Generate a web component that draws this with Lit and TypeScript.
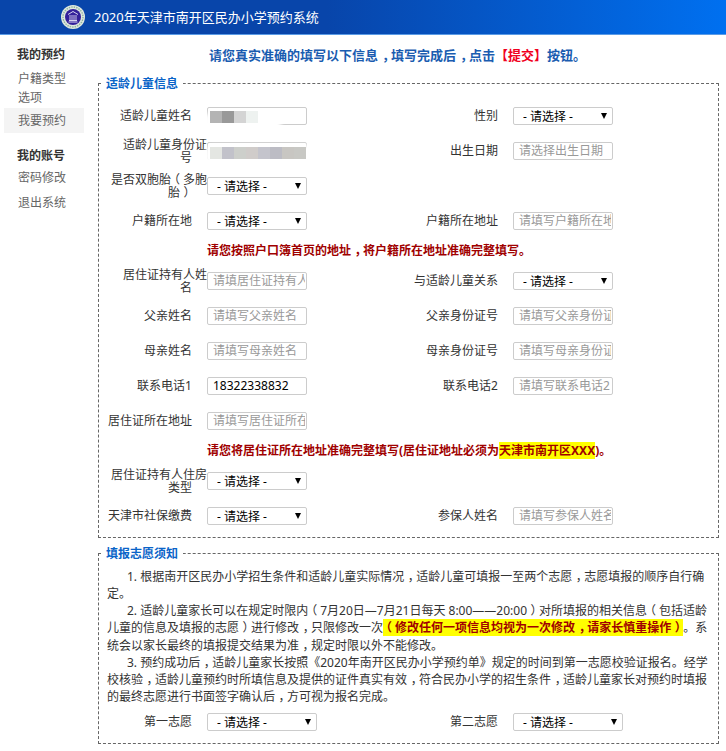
import { LitElement, html, css } from "lit";
import { customElement } from "lit/decorators.js";

type Cell = { label: string; kind: "input" | "select" | "value" | "blur1" | "blur2" | "none"; text?: string };

const i = (label: string, text: string): Cell => ({ label, kind: "input", text });
const s = (label: string): Cell => ({ label, kind: "select" });
const none: Cell = { label: "", kind: "none" };

const rowsA: Cell[][] = [
  [{ label: "适龄儿童姓名", kind: "blur1" }, s("性别")],
  [{ label: "适龄儿童身份证号", kind: "blur2" }, i("出生日期", "请选择出生日期")],
  [s("是否双胞胎（多胞胎）"), none],
  [s("户籍所在地"), i("户籍所在地址", "请填写户籍所在地址")],
];
const rowsB: Cell[][] = [
  [i("居住证持有人姓名", "请填居住证持有人姓名"), s("与适龄儿童关系")],
  [i("父亲姓名", "请填写父亲姓名"), i("父亲身份证号", "请填写父亲身份证号")],
  [i("母亲姓名", "请填写母亲姓名"), i("母亲身份证号", "请填写母亲身份证号")],
  [{ label: "联系电话1", kind: "value", text: "18322338832" }, i("联系电话2", "请填写联系电话2")],
  [i("居住证所在地址", "请填写居住证所在地址"), none],
];
const rowsC: Cell[][] = [
  [s("居住证持有人住房类型"), none],
  [s("天津市社保缴费"), i("参保人姓名", "请填写参保人姓名")],
];

/* The reference font centres its fullwidth punctuation; nudge the glyphs to match. */
const zh = (text: string) =>
  text.split(/([，（）])/).map((part) => {
    if (part === "，") return html`<span class="pc">，</span>`;
    if (part === "（") return html`<span class="po">（</span>`;
    if (part === "）") return html`<span class="pe">）</span>`;
    return part;
  });

@customElement("app-root")
export class AppRoot extends LitElement {
  static styles = css`
    :host {
      display: block;
      font-family: "Noto Sans", "Noto Sans CJK SC", sans-serif;
      font-size: 12px;
      line-height: 17px;
      color: #333;
      text-spacing-trim: space-all;
    }
    * { box-sizing: border-box; }
    .pc, .pe { position: relative; left: 0.3em; }
    .po { position: relative; left: -0.25em; }
    .header {
      height: 35px;
      display: flex;
      align-items: center;
      gap: 9px;
      padding-left: 61px;
      background: linear-gradient(90deg, #0845aa 0%, #0845aa 45%, #0070f0 100%);
      border-bottom: 1px solid #5a9be6;
      color: #fff;
      font-size: 13px;
    }
    .logo { width: 24px; height: 24px; display: block; }
    .body { display: flex; }
    .side { width: 98px; flex: none; padding: 7px 14px 0 4px; }
    .side h4 { margin: 0; padding-left: 13px; font-size: 12px; font-weight: bold; color: #333; height: 24px; line-height: 25px; }
    .side h4.second { margin-top: 10px; margin-bottom: -2px; }
    .side a { display: block; padding-left: 14px; color: #666; line-height: 19px; padding-top: 3px; padding-bottom: 3px; }
    .side a.multi { padding-bottom: 1px; }
    .side a.active { background: #f4f4f4; line-height: 25px; padding-top: 0; padding-bottom: 0; }
    .main { flex: 1; min-width: 0; padding: 8px 7px 7px 0; }
    .lead { margin: 0 0 7px; padding-left: 111px; height: 25px; line-height: 25px; font-size: 13px; font-weight: bold; color: #1a5cb0; }
    .lead em { font-style: normal; color: #f00020; }
    fieldset { margin: 0; padding: 0 5px 4px 8px; border: 1px dashed #666; min-width: 0; }
    fieldset + fieldset { margin-top: 7px; }
    legend { margin-left: -6px; padding: 0 5px; font-weight: bold; color: #0a64c8; line-height: 17px; }
    .form { display: flex; flex-direction: column; margin-top: 6px; }
    .row { display: flex; height: 35px; align-items: center; }
    .cell { width: 306px; flex: none; display: flex; align-items: center; }
    .label { width: 100px; flex: none; text-align: right; line-height: 13px; color: #333; }
    .gap { letter-spacing: 11.88px; }
    .control { position: relative; width: 100px; height: 18px; }
    .control.wide { width: 110px; }
    input, select {
      display: block;
      width: 100%;
      height: 100%;
      margin: 0;
      font: inherit;
      color: #000;
      background: #fff;
      border: 1px solid #ccc;
      border-radius: 2px;
      outline: none;
    }
    input { padding: 0 1px 0 5px; }
    input::placeholder { color: #999; opacity: 1; }
    select { appearance: none; padding: 0 0 0 9px; }
    .select::after {
      content: "";
      position: absolute;
      right: 6px;
      top: 6px;
      border-left: 3px solid transparent;
      border-right: 3px solid transparent;
      border-top: 6px solid #000;
      pointer-events: none;
    }
    .note { height: 25px; line-height: 25px; padding-left: 100px; font-weight: bold; color: #a00000; white-space: nowrap; }
    mark { background: #ffff00; color: inherit; }
    .blur { position: absolute; display: flex; height: 12px; left: 3px; top: 4px; }
    .blur i { display: block; width: 12px; height: 12px; }
    .smear { position: absolute; background: #fff; border-radius: 8px; filter: blur(2px); }
    .rules { margin-top: 6px; margin-right: -1px; color: #333; line-height: 17.14px; }
    .rules p { margin: 0; text-indent: 20px; }
    .rules mark { font-weight: bold; color: #a00000; }
    .choice { display: flex; align-items: center; height: 35px; margin-top: -1px; }
  `;

  private control(c: Cell) {
    if (c.kind === "select") {
      return html`<div class="control select">
        <select><option>- 请选择 -</option></select>
      </div>`;
    }
    if (c.kind === "value") {
      return html`<div class="control"><input value=${c.text ?? ""} /></div>`;
    }
    if (c.kind === "blur1") {
      return html`<div class="control">
        <input />
        <div class="smear" style="left:-4px;top:6px;width:78px;height:26px"></div>
        <div class="blur">
          ${["#b4b4b4", "#999999", "#d4d4d4", "#eef2f0"].map((b) => html`<i style="background:${b}"></i>`)}
        </div>
      </div>`;
    }
    if (c.kind === "blur2") {
      return html`<div class="control">
        <input />
        <div class="smear" style="left:-2px;top:3px;width:116px;height:22px"></div>
        <div class="blur" style="top:5px">
          ${["#e4e6e2", "#c2c2ca", "#cdcfcb", "#d0ccca", "#c4c4cc", "#bcbcc4", "#c8c6c2", "#c8c8c4"].map(
            (b) => html`<i style="background:${b}"></i>`,
          )}
        </div>
      </div>`;
    }
    return html`<div class="control"><input placeholder=${c.text ?? ""} /></div>`;
  }

  private cell(c: Cell) {
    if (c.kind === "none") return html`<div class="cell"></div>`;
    return html`<div class="cell">
      <div class="label">${zh(c.label)}<span class="gap">\u00a0</span></div>
      ${this.control(c)}
    </div>`;
  }

  private rows(rows: Cell[][]) {
    return rows.map((r) => html`<div class="row">${r.map((c) => this.cell(c))}</div>`);
  }

  render() {
    return html`
      <div class="header">
        <svg class="logo" viewBox="0 0 24 24">
          <circle cx="12" cy="12" r="12" fill="#dfe8e0" />
          <circle cx="12" cy="12" r="10" fill="none" stroke="#8fb5a0" stroke-width="1.4" stroke-dasharray="1.5 1" />
          <circle cx="12" cy="12" r="8" fill="#33209a" />
          <path d="M7 9.5 12 6.5l5 3M8 15.5h8M7.5 17h9" fill="none" stroke="#d8d4f0" stroke-width="1" />
          <path d="M9 10v5M11 10v5M13 10v5M15 10v5" stroke="#d8d4f0" stroke-width="0.9" />
        </svg>
        <span>2020年天津市南开区民办小学预约系统</span>
      </div>
      <div class="body">
        <nav class="side">
          <h4>我的预约</h4>
          <a class="multi">户籍类型<br />选项</a>
          <a class="active">我要预约</a>
          <h4 class="second">我的账号</h4>
          <a>密码修改</a>
          <a>退出系统</a>
        </nav>
        <main class="main">
          <p class="lead">${zh("请您真实准确的填写以下信息，填写完成后，点击")}<em>【提交】</em>按钮。</p>
          <fieldset>
            <legend>适龄儿童信息</legend>
            <div class="form">
              ${this.rows(rowsA)}
              <div class="note">${zh("请您按照户口簿首页的地址，将户籍所在地址准确完整填写。")}</div>
              ${this.rows(rowsB)}
              <div class="note">请您将居住证所在地址准确完整填写(居住证地址必须为<mark>天津市南开区XXX</mark>)。</div>
              ${this.rows(rowsC)}
            </div>
          </fieldset>
          <fieldset>
            <legend>填报志愿须知</legend>
            <div class="rules">
              <p>${zh("1. 根据南开区民办小学招生条件和适龄儿童实际情况，适龄儿童可填报一至两个志愿，志愿填报的顺序自行确定。")}</p>
              <p>${zh("2. 适龄儿童家长可以在规定时限内（7月20日—7月21日每天 8:00——20:00）对所填报的相关信息（包括适龄儿童的信息及填报的志愿）进行修改，只限修改一次")}<mark>${zh("（修改任何一项信息均视为一次修改，请家长慎重操作）")}</mark>${zh("。系统会以家长最终的填报提交结果为准，规定时限以外不能修改。")}</p>
              <p>${zh("3. 预约成功后，适龄儿童家长按照《2020年南开区民办小学预约单》规定的时间到第一志愿校验证报名。经学校核验，适龄儿童预约时所填信息及提供的证件真实有效，符合民办小学的招生条件，适龄儿童家长对预约时填报的最终志愿进行书面签字确认后，方可视为报名完成。")}</p>
            </div>
            <div class="choice">
              <div class="cell">
                <div class="label">第一志愿<span class="gap">\u00a0</span></div>
                <div class="control wide select"><select><option>- 请选择 -</option></select></div>
              </div>
              <div class="cell">
                <div class="label">第二志愿<span class="gap">\u00a0</span></div>
                <div class="control wide select"><select><option>- 请选择 -</option></select></div>
              </div>
            </div>
          </fieldset>
        </main>
      </div>
    `;
  }
}
